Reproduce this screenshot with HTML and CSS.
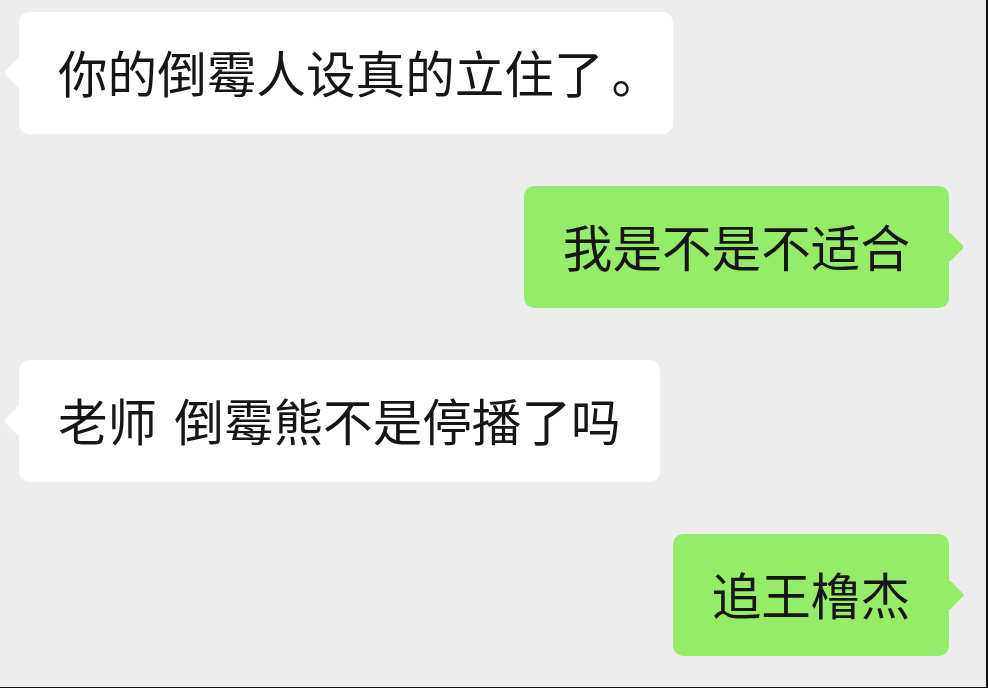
FILE: index.html
```html
<!DOCTYPE html>
<html lang="zh-CN">
<head>
  <meta charset="UTF-8">
  <meta name="viewport" content="width=device-width, initial-scale=1.0">
  <title>聊天记录</title>
  <link rel="stylesheet" href="styles.css">
</head>
<body>
  <div class="chat">
    <div class="msg msg-in">
      <div class="bubble">你的倒霉人设真的立住了<span class="stop">。</span></div>
    </div>
    <div class="msg msg-out">
      <div class="bubble">我是不是不适合</div>
    </div>
    <div class="msg msg-in">
      <div class="bubble">老师 倒霉熊不是停播了吗</div>
    </div>
    <div class="msg msg-out">
      <div class="bubble">追王橹杰</div>
    </div>
  </div>
</body>
</html>
```

FILE: styles.css
```css
* {
  margin: 0;
  padding: 0;
  box-sizing: border-box;
}

body {
  font-family: "Noto Sans CJK SC", "Noto Sans", sans-serif;
  background-color: #ededed;
  color: #161616;
  height: 100vh;
  overflow: hidden;
}

.chat {
  height: 100%;
  display: flex;
  flex-direction: column;
  gap: 52px;
  padding: 12px 0 0 19px;
  border-right: 2px solid #111;
  border-bottom: 1px solid #111;
}

.msg {
  display: flex;
}

.msg-out {
  justify-content: flex-end;
  padding-right: 37px;
}

.bubble {
  position: relative;
  height: 122px;
  padding: 0 39px 4px;
  font-size: 49.6px;
  line-height: 118px;
  word-spacing: 6px;
  white-space: nowrap;
  background-color: #fff;
  border-radius: 10px;
}

/* full stop sits a bit tighter than a full-width cell */
.stop {
  display: inline-block;
  width: 30px;
  padding-left: 8px;
  overflow: visible;
}

/* little arrow pointing at the sender */
.bubble::before {
  content: "";
  position: absolute;
  top: 50%;
  width: 22px;
  height: 22px;
  background-color: inherit;
  border-radius: 3px;
  transform: translate(-50%, -50%) rotate(45deg);
}

.msg-in .bubble::before {
  left: 0;
}

.msg-out .bubble {
  background-color: #95ec69;
}

.msg-out .bubble::before {
  left: 100%;
}
```
